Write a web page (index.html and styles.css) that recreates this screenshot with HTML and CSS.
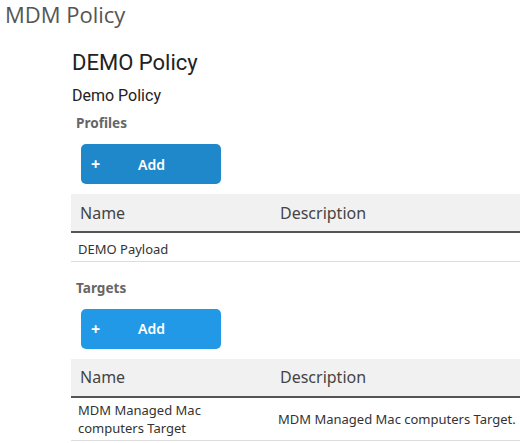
FILE: index.html
```html
<!DOCTYPE html>
<html lang="en">
<head>
    <meta charset="UTF-8">
    <meta name="viewport" content="width=device-width, initial-scale=1.0">
    <title>MDM Policy</title>
    <link rel="stylesheet" href="styles.css">
</head>
<body>
<h1 class="page-title">MDM Policy</h1>
<div class="policy">
    <h2 class="policy-name">DEMO Policy</h2>
    <div class="policy-desc">Demo Policy</div>

    <!-- Profiles -->
    <div class="section-title">Profiles</div>
    <button class="add-btn">
        <span class="plus">+</span>
        <span class="label">Add</span>
    </button>
    <table class="list">
        <colgroup>
            <col class="col-name">
            <col>
        </colgroup>
        <thead>
        <tr>
            <th>Name</th>
            <th>Description</th>
        </tr>
        </thead>
        <tbody>
        <tr>
            <td>DEMO Payload</td>
            <td></td>
        </tr>
        </tbody>
    </table>

    <!-- Targets -->
    <div class="section-title">Targets</div>
    <button class="add-btn active">
        <span class="plus">+</span>
        <span class="label">Add</span>
    </button>
    <table class="list">
        <colgroup>
            <col class="col-name">
            <col>
        </colgroup>
        <thead>
        <tr>
            <th>Name</th>
            <th>Description</th>
        </tr>
        </thead>
        <tbody>
        <tr>
            <td>MDM Managed Mac computers Target</td>
            <td>MDM Managed Mac computers Target.</td>
        </tr>
        </tbody>
    </table>
</div>
</body>
</html>
```
FILE: styles.css
```css
body {
    margin: 0;
    font-family: "Noto Sans", "Open Sans", sans-serif;
    color: #333;
    background-color: #fff;
    overflow: hidden;
}
.page-title {
    margin: 0;
    padding: 0 0 0 5px;
    font-family: "Open Sans", sans-serif;
    font-size: 22px;
    font-weight: normal;
    line-height: 28px;
    color: #555;
}
.policy {
    padding: 20px 0 0 71px;
}
.policy-name {
    margin: 0;
    padding-left: 1px;
    font-family: Roboto, sans-serif;
    font-size: 22px;
    font-weight: normal;
    line-height: 30px;
    color: #222;
}
.policy-desc {
    margin-top: 8px;
    padding-left: 1px;
    font-family: Roboto, sans-serif;
    font-size: 16px;
    line-height: 20px;
    color: #222;
}
.section-title {
    margin-top: 8px;
    padding-left: 5px;
    font-size: 13.6px;
    font-weight: bold;
    line-height: 18px;
    color: #666;
}
.add-btn {
    display: flex;
    align-items: center;
    width: 140px;
    height: 40px;
    margin: 12px 0 10px 10px;
    padding: 0 0 0 10px;
    border: none;
    border-radius: 5px;
    background-color: #1f88cb;
    color: #fff;
    font-family: "Noto Sans", "Open Sans", sans-serif;
    font-size: 14px;
    font-weight: 600;
    cursor: pointer;
}
.add-btn.active {
    background-color: #2299e6;
}
.add-btn .plus {
    width: 47px;
    text-align: left;
    font-size: 16px;
    font-weight: bold;
}
.list {
    width: 100%;
    table-layout: fixed;
    border-collapse: collapse;
    margin-bottom: 17px;
}
.list .col-name {
    width: 200px;
}
.list thead tr {
    height: 38px;
}
.list th {
    padding: 0 9px;
    background-color: #f1f1f1;
    border-bottom: 2px solid #555;
    text-align: left;
    font-size: 16px;
    font-weight: normal;
    color: #444;
    vertical-align: middle;
}
.list tbody tr {
    height: 29px;
}
.list td {
    padding: 3px 7px;
    border-bottom: 1px solid #ddd;
    font-size: 13px;
    line-height: 18px;
    color: #333;
    vertical-align: middle;
    white-space: nowrap;
}
.list td:first-child {
    vertical-align: bottom;
    white-space: normal;
}
```
